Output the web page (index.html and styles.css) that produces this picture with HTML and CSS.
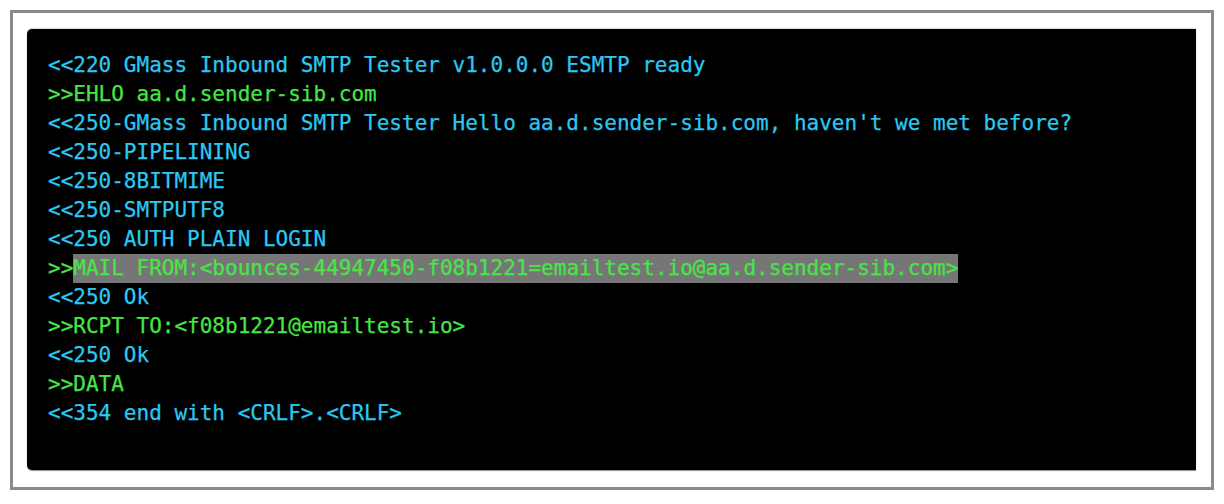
FILE: index.html
```html
<!DOCTYPE html>
<html>
<head>
<meta charset="utf-8">
<link rel="stylesheet" href="styles.css">
</head>
<body>
<div class="frame">
  <div class="terminal">
    <div class="line in">&lt;&lt;220 GMass Inbound SMTP Tester v1.0.0.0 ESMTP ready</div>
    <div class="line out">&gt;&gt;EHLO aa.d.sender-sib.com</div>
    <div class="line in">&lt;&lt;250-GMass Inbound SMTP Tester Hello aa.d.sender-sib.com, haven't we met before?</div>
    <div class="line in">&lt;&lt;250-PIPELINING</div>
    <div class="line in">&lt;&lt;250-8BITMIME</div>
    <div class="line in">&lt;&lt;250-SMTPUTF8</div>
    <div class="line in">&lt;&lt;250 AUTH PLAIN LOGIN</div>
    <div class="line out">&gt;&gt;<span class="hl">MAIL FROM:&lt;bounces-44947450-f08b1221=emailtest.io@aa.d.sender-sib.com&gt;</span></div>
    <div class="line in">&lt;&lt;250 Ok</div>
    <div class="line out">&gt;&gt;RCPT TO:&lt;f08b1221@emailtest.io&gt;</div>
    <div class="line in">&lt;&lt;250 Ok</div>
    <div class="line out">&gt;&gt;DATA</div>
    <div class="line in">&lt;&lt;354 end with &lt;CRLF&gt;.&lt;CRLF&gt;</div>
  </div>
</div>
</body>
</html>
```
FILE: styles.css
```css
html, body {
  margin: 0;
  padding: 0;
  background: #ffffff;
}
.frame {
  margin: 10px;
  width: 1204px;
  height: 480px;
  box-sizing: border-box;
  border: 3px solid #8a8a8a;
  padding: 16px 15px 0 14px;
  background: #ffffff;
}
.terminal {
  width: 1169px;
  height: 441px;
  box-sizing: border-box;
  background: #000000;
  border-radius: 5px 0 0 5px;
  box-shadow: 0 1px 1px rgba(0,0,0,0.45), 0 -1px 1px rgba(0,0,0,0.15);
  padding: 22px 0 0 21px;
  font-family: "DejaVu Sans Mono", "Liberation Mono", monospace;
  font-size: 21px;
  line-height: 29px;
  -webkit-text-stroke: 0.25px currentColor;
}
.line {
  height: 29px;
  white-space: pre;
}
.in {
  color: #2cc8f2;
}
.out {
  color: #46e646;
}
.hl {
  display: inline-block;
  height: 29px;
  background: #767676;
}
```
